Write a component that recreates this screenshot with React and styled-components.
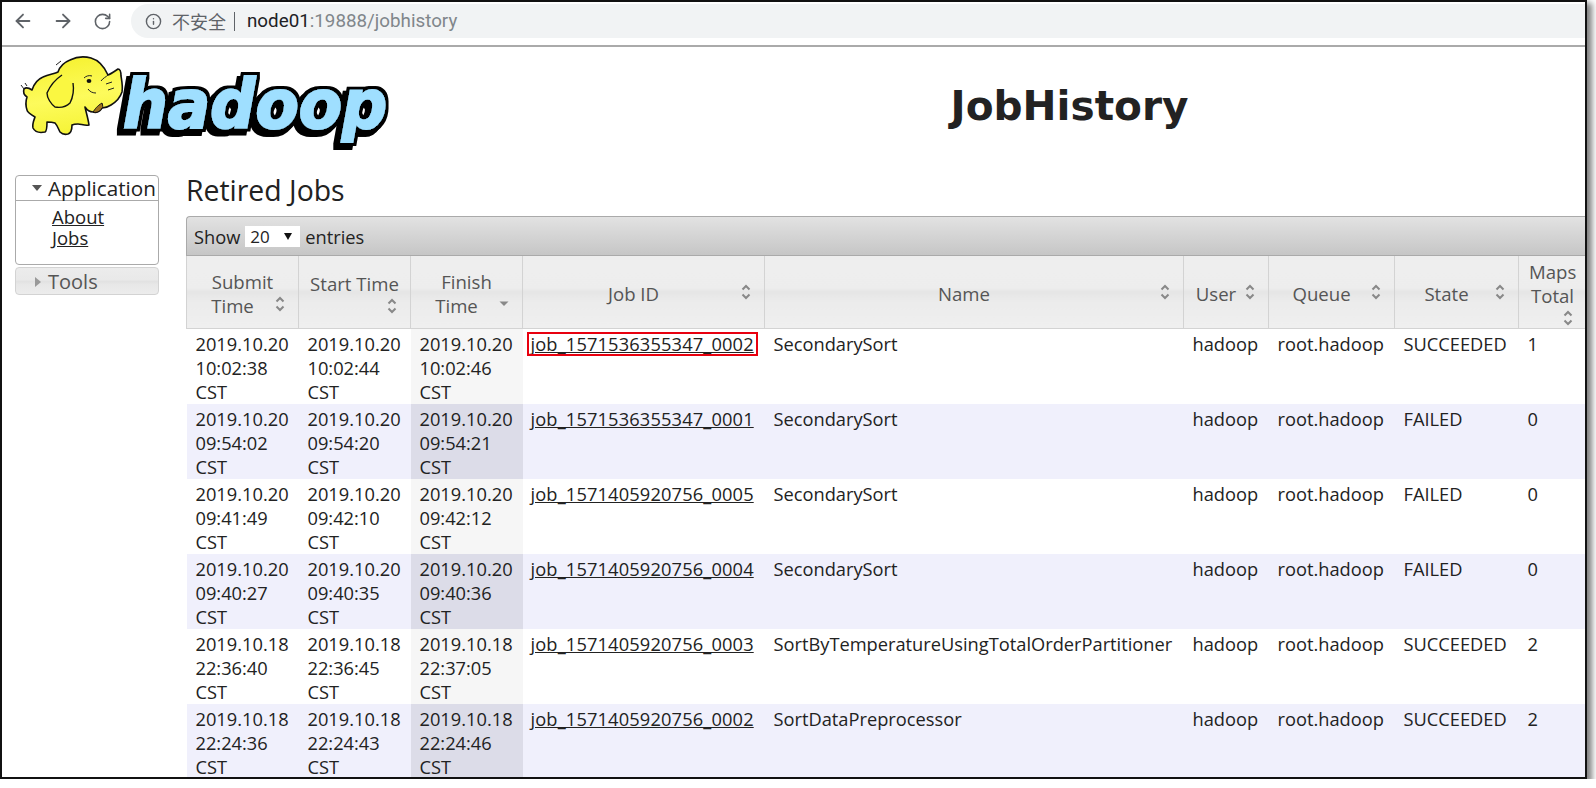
import React from 'react'
import styled, { createGlobalStyle } from 'styled-components'
import { ArrowLeft, ArrowRight, RotateCw, Info } from 'lucide-react'

const GlobalStyle = createGlobalStyle`
	html, body {
		margin: 0;
		padding: 0;
		background: #fff;
		overflow: hidden;
	}
	body {
		font-family: 'Open Sans', 'Noto Sans CJK SC', sans-serif;
		color: #222;
	}
`

const Frame = styled.div`
	box-sizing: border-box;
	width: 1587px;
	height: 779px;
	border: 2px solid #111;
	overflow: hidden;
	background: #fff;
	box-shadow: 4px 4px 6px 1px rgba(0, 0, 0, 0.5);
`

const BrowserBar = styled.div`
	display: flex;
	align-items: center;
	height: 45px;
	padding: 0 0 5px 9px;
	box-sizing: border-box;
	border-bottom: 2px solid #aaa;
	gap: 17px;
`

const NavIcon = styled.span`
	display: flex;
	width: 23px;
	justify-content: center;
	color: #5f6368;
`

const Address = styled.div`
	flex: 1;
	display: flex;
	align-items: center;
	height: 34px;
	padding-left: 14px;
	border-radius: 17px 0 0 17px;
	background: #f1f3f4;
	font-family: Roboto, 'Noto Sans CJK SC', sans-serif;
	font-size: 18.8px;
	color: #80868b;
`

const Warn = styled.span`
	margin-left: 10px;
	font-family: 'Noto Sans CJK SC', sans-serif;
	font-size: 18px;
	color: #5f6368;
`

const Divider = styled.span`
	width: 1px;
	height: 19px;
	margin: 0 12px 0 8px;
	background: #5f6368;
`

const Host = styled.span`
	color: #202124;
`

const Banner = styled.header`
	display: flex;
	align-items: flex-start;
	height: 128px;
	padding: 9px 0 0 14px;
	box-sizing: border-box;
`

const LogoArt = styled.svg`
	flex: none;
	width: 372px;
	height: 90px;
	overflow: visible;
`

const PageTitle = styled.h1`
	flex: 1;
	margin: 26px 0 0;
	padding-left: 166px;
	text-align: center;
	font-family: 'DejaVu Sans', sans-serif;
	font-size: 40.6px;
	line-height: 48px;
	font-weight: 700;
	color: #222;
`

const Body = styled.div`
	display: flex;
	align-items: flex-start;
	padding-left: 13px;
`

const Side = styled.nav`
	flex: none;
	width: 144px;
	margin-right: 27px;
`

const NavPanel = styled.div`
	box-sizing: border-box;
	border: 1px solid #aaa;
	border-radius: 4px;
	height: 90px;
`

const NavHead = styled.div`
	display: flex;
	align-items: center;
	box-sizing: border-box;
	height: 25px;
	padding-left: ${p => (p.$closed ? '19px' : '16px')};
	padding-top: ${p => (p.$closed ? '2px' : '0')};
	gap: ${p => (p.$closed ? '7px' : '6px')};
	font-size: ${p => (p.$closed ? '20px' : '20.7px')};
	line-height: 22px;
	white-space: nowrap;
	color: ${p => (p.$closed ? '#555' : '#222')};
	border-bottom: ${p => (p.$closed ? 'none' : '1px solid #aaa')};
`

const NavList = styled.div`
	display: flex;
	flex-direction: column;
	padding: 5px 0 0 36px;
	font-size: 18.5px;
	line-height: 21px;
`

const PlainLink = styled.a`
	color: #222;
	text-decoration: underline;
`

const ToolsPanel = styled.div`
	box-sizing: border-box;
	margin-top: 2px;
	height: 28px;
	border: 1px solid #d3d3d3;
	border-radius: 4px;
	background: linear-gradient(#ececec 0, #e9e9e9 45%, #e2e2e2 52%, #e8e8e8 65%, #ececec 100%);
`

const Caret = styled.span`
	flex: none;
	width: 0;
	height: 0;
	border-style: solid;
	${p =>
		p.$closed
			? 'border-width: 5px 0 5px 6px; border-color: transparent transparent transparent #999;'
			: 'border-width: 6px 5px 0 5px; border-color: #555 transparent transparent transparent;'}
`

const Content = styled.main`
	flex: none;
	width: 1400px;
`

const Heading = styled.h2`
	margin: 0 0 10px;
	font-size: 28.4px;
	line-height: 31px;
	font-weight: 400;
	color: #222;
`

const TableBar = styled.div`
	display: flex;
	align-items: center;
	box-sizing: border-box;
	height: 40px;
	padding-left: 7px;
	gap: 5px;
	border: 1px solid #aaa;
	border-right: none;
	border-radius: 4px 0 0 0;
	background: linear-gradient(#e2e2e2, #c6c6c6);
	font-size: 18.25px;
`

const PageSize = styled.div`
	display: flex;
	align-items: center;
	justify-content: space-between;
	box-sizing: border-box;
	width: 55px;
	height: 21px;
	padding: 0 8px 0 5px;
	background: #fff;
	font-size: 17px;
`

const DownTriangle = styled.span`
	width: 0;
	height: 0;
	border-style: solid;
	border-width: 7px 4px 0 4px;
	border-color: #111 transparent transparent transparent;
`

const JobsTable = styled.table`
	table-layout: fixed;
	width: 1400px;
	border-collapse: collapse;
	border-spacing: 0;
	font-size: 18.25px;
	line-height: 24px;
`

const HeadCell = styled.th`
	box-sizing: border-box;
	height: 72px;
	padding: 4px 10px 0;
	border: 1px solid #d3d3d3;
	border-top: none;
	font-size: 18.6px;
	font-weight: 400;
	text-align: center;
	color: #555;
	background: linear-gradient(#eeeeee 0, #ededed 44%, #e5e5e5 50%, #ebebeb 62%, #efefef 100%);
`

const SortMark = styled.svg`
	float: right;
	width: 16px;
	height: 20px;
	margin-left: 4px;
`

const Row = styled.tr`
	background: ${p => (p.$even ? '#f0f0fc' : '#fff')};
`

const Cell = styled.td`
	box-sizing: border-box;
	height: 75px;
	padding: 3px 8px 0 ${p => (p.$tight ? '8px' : '9px')};
	vertical-align: top;
	white-space: ${p => (p.$nowrap ? 'nowrap' : 'normal')};
`

const FinishCell = styled(Cell)`
	background: ${p => (p.$even ? '#dcdce8' : '#f6f6f6')};
`

const JobLink = styled(PlainLink)`
	letter-spacing: 0.14px;
	${p =>
		p.$marked
			? 'display: inline-block; line-height: 18px; padding: 0 1px; margin-left: -1px; outline: 2px solid #e8000f; outline-offset: 1px;'
			: ''}
`

const SortIcon = ({ down }) => (
	<SortMark viewBox="0 0 16 20">
		{down ? (
			<path d="M3.5 7.5h9L8 12z" fill="#888" />
		) : (
			<g fill="none" stroke="#888" strokeWidth="2">
				<path d="M4.5 7.5 8 4l3.5 3.5" />
				<path d="M4.5 12.5 8 16l3.5-3.5" />
			</g>
		)}
	</SortMark>
)

const Logo = () => (
	<LogoArt viewBox="0 0 372 90">
		<defs>
			<linearGradient id="hide" x1="0" y1="0" x2="0.2" y2="1">
				<stop offset="0" stopColor="#f5f02a" />
				<stop offset="0.6" stopColor="#fdfb5c" />
				<stop offset="1" stopColor="#f6f43a" />
			</linearGradient>
			{/* black outline and the drop to the lower left, under the blue letters */}
			<filter id="wordmark" x="-10%" y="-20%" width="120%" height="140%">
				<feMorphology in="SourceAlpha" operator="dilate" radius="2.5" result="fat" />
				<feOffset in="fat" dx="-4" dy="4" result="drop" />
				<feMerge>
					<feMergeNode in="drop" />
					<feMergeNode in="fat" />
					<feMergeNode in="SourceGraphic" />
				</feMerge>
			</filter>
		</defs>
		<text
			x="107"
			y="72"
			textLength="264"
			lengthAdjust="spacingAndGlyphs"
			fontFamily="'DejaVu Sans', sans-serif"
			fontWeight="700"
			fontStyle="italic"
			fontSize="68"
			fill="#9fdfff"
			stroke="#9fdfff"
			strokeWidth="2"
			filter="url(#wordmark)"
		>
			hadoop
		</text>
		<path d="M16 34C18 28 22 23 27 21 33 18 38 18 42 16 44 10 49 6 54 4 60 1 68 0 75 2 82 4 88 10 92 19 95 18 99 15 102 13 105 13 105 17 105 20 106 26 107 31 106 36 104 42 100 46 95 49 92 51 89 52 86 52 84 56 80 57 77 56 74 56 71 54 69 51 70 56 72 62 73 69 69 70 65 68 62 68 60 68 58 68 56 69 56 73 55 77 52 78 48 79 45 77 44 76 42 72 41 69 39 67 36 66 33 66 31 66 31 70 31 75 29 76 24 77 19 76 17 72 16 68 18 64 19 61 14 58 11 56 11 54 9 48 10 44 11 41 8 39 7 36 8 33 10 31 13 32 16 34Z" fill="url(#hide)" stroke="#111" strokeWidth="1.6" strokeLinejoin="round" />
		<path d="M46 19C40 23 34 30 31 37 31 42 35 48 39 51 45 52 51 50 54 47 57 41 58 33 57 27" fill="#faf741" stroke="#111" strokeWidth="1.4" />
		<path d="M77 56C79 53 81 50 86 47 87 50 87 52 86 52 84 56 80 57 77 56Z" fill="#a0731f" stroke="#111" strokeWidth="1" />
		<ellipse cx="73" cy="25" rx="2.4" ry="2" fill="#111" />
		<g fill="none" stroke="#222" strokeWidth="1">
			<path d="M68 22c2-2 5-3 8-2" />
			<path d="M92 19c-2 2-5 3-7 6" />
			<path d="M96 26l-6 2" />
			<path d="M98 32l-6 2" />
			<path d="M72 33c2 3 5 4 8 4" />
			<path d="M40 9 45 5M5 29l3 4M9 27l2 3" />
		</g>
	</LogoArt>
)

const columns = [
	{ title: 'Submit Time', width: 112 },
	{ title: 'Start Time', width: 112 },
	{ title: 'Finish Time', width: 112, down: true },
	{ title: 'Job ID', width: 242 },
	{ title: 'Name', width: 419 },
	{ title: 'User', width: 85 },
	{ title: 'Queue', width: 126 },
	{ title: 'State', width: 124 },
	{ title: 'Maps Total', width: 68 },
]

const jobs = [
	['2019.10.20', '10:02:38', '10:02:44', '10:02:46', 'job_1571536355347_0002', 'SecondarySort', 'SUCCEEDED', 1],
	['2019.10.20', '09:54:02', '09:54:20', '09:54:21', 'job_1571536355347_0001', 'SecondarySort', 'FAILED', 0],
	['2019.10.20', '09:41:49', '09:42:10', '09:42:12', 'job_1571405920756_0005', 'SecondarySort', 'FAILED', 0],
	['2019.10.20', '09:40:27', '09:40:35', '09:40:36', 'job_1571405920756_0004', 'SecondarySort', 'FAILED', 0],
	['2019.10.18', '22:36:40', '22:36:45', '22:37:05', 'job_1571405920756_0003', 'SortByTemperatureUsingTotalOrderPartitioner', 'SUCCEEDED', 2],
	['2019.10.18', '22:24:36', '22:24:43', '22:24:46', 'job_1571405920756_0002', 'SortDataPreprocessor', 'SUCCEEDED', 2],
]

const Stamp = ({ date, time }) => (
	<>
		{date}
		<br />
		{time}
		<br />
		CST
	</>
)

const App = () => {
	return (
		<>
			<GlobalStyle />
			<Frame>
				<BrowserBar>
					<NavIcon><ArrowLeft size={22} strokeWidth={2} /></NavIcon>
					<NavIcon><ArrowRight size={22} strokeWidth={2} /></NavIcon>
					<NavIcon><RotateCw size={19} strokeWidth={2} /></NavIcon>
					<Address>
						<Info size={17} strokeWidth={2} color="#5f6368" />
						<Warn>不安全</Warn>
						<Divider />
						<Host>node01</Host>:19888/jobhistory
					</Address>
				</BrowserBar>

				<Banner>
					<Logo />
					<PageTitle>JobHistory</PageTitle>
				</Banner>

				<Body>
					<Side>
						<NavPanel>
							<NavHead>
								<Caret />
								Application
							</NavHead>
							<NavList>
								<PlainLink href="#about">About</PlainLink>
								<PlainLink href="#jobs">Jobs</PlainLink>
							</NavList>
						</NavPanel>
						<ToolsPanel>
							<NavHead $closed>
								<Caret $closed />
								Tools
							</NavHead>
						</ToolsPanel>
					</Side>

					<Content>
						<Heading>Retired Jobs</Heading>
						<TableBar>
							Show
							<PageSize>20<DownTriangle /></PageSize>
							entries
						</TableBar>
						<JobsTable>
							<colgroup>
								{columns.map(col => <col key={col.title} width={col.width} />)}
							</colgroup>
							<thead>
								<tr>
									{columns.map(col => (
										<HeadCell key={col.title}>
											{col.title}
											<SortIcon down={col.down} />
										</HeadCell>
									))}
								</tr>
							</thead>
							<tbody>
								{jobs.map((job, i) => {
									const even = i % 2 === 1
									return (
										<Row key={job[4]} $even={even}>
											<Cell><Stamp date={job[0]} time={job[1]} /></Cell>
											<Cell><Stamp date={job[0]} time={job[2]} /></Cell>
											<FinishCell $even={even}><Stamp date={job[0]} time={job[3]} /></FinishCell>
											<Cell $tight><JobLink href="#job" $marked={i === 0}>{job[4]}</JobLink></Cell>
											<Cell $nowrap>{job[5]}</Cell>
											<Cell>hadoop</Cell>
											<Cell>root.hadoop</Cell>
											<Cell>{job[6]}</Cell>
											<Cell>{job[7]}</Cell>
										</Row>
									)
								})}
							</tbody>
						</JobsTable>
					</Content>
				</Body>
			</Frame>
		</>
	)
}

export default App
